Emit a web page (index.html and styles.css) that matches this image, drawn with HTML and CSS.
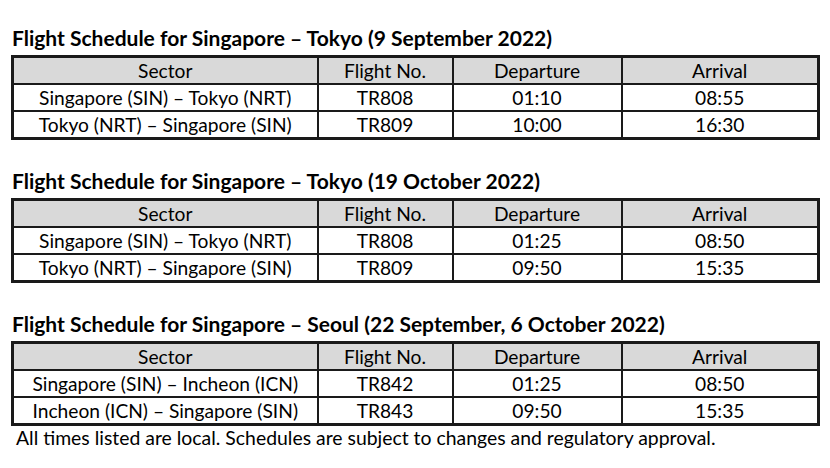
FILE: index.html
```html
<!DOCTYPE html>
<html>
<head>
<meta charset="utf-8">
<link rel="stylesheet" href="styles.css">
</head>
<body>
<section class="block">
  <h2 class="title">Flight Schedule for Singapore – Tokyo (9 September 2022)</h2>
  <table class="sched">
    <colgroup><col class="c1"><col class="c2"><col class="c3"><col class="c4"></colgroup>
    <tr class="head"><td>Sector</td><td>Flight No.</td><td>Departure</td><td>Arrival</td></tr>
    <tr><td>Singapore (SIN) – Tokyo (NRT)</td><td>TR808</td><td>01:10</td><td>08:55</td></tr>
    <tr><td>Tokyo (NRT) – Singapore (SIN)</td><td>TR809</td><td>10:00</td><td>16:30</td></tr>
  </table>
</section>
<section class="block">
  <h2 class="title">Flight Schedule for Singapore – Tokyo (19 October 2022)</h2>
  <table class="sched">
    <colgroup><col class="c1"><col class="c2"><col class="c3"><col class="c4"></colgroup>
    <tr class="head"><td>Sector</td><td>Flight No.</td><td>Departure</td><td>Arrival</td></tr>
    <tr><td>Singapore (SIN) – Tokyo (NRT)</td><td>TR808</td><td>01:25</td><td>08:50</td></tr>
    <tr><td>Tokyo (NRT) – Singapore (SIN)</td><td>TR809</td><td>09:50</td><td>15:35</td></tr>
  </table>
</section>
<section class="block">
  <h2 class="title">Flight Schedule for Singapore – Seoul (22 September, 6 October 2022)</h2>
  <table class="sched">
    <colgroup><col class="c1"><col class="c2"><col class="c3"><col class="c4"></colgroup>
    <tr class="head"><td>Sector</td><td>Flight No.</td><td>Departure</td><td>Arrival</td></tr>
    <tr><td>Singapore (SIN) – Incheon (ICN)</td><td>TR842</td><td>01:25</td><td>08:50</td></tr>
    <tr><td>Incheon (ICN) – Singapore (SIN)</td><td>TR843</td><td>09:50</td><td>15:35</td></tr>
  </table>
  <p class="note">All times listed are local. Schedules are subject to changes and regulatory approval.</p>
</section>
</body>
</html>
```

FILE: styles.css
```css
html, body {
  margin: 0;
  padding: 0;
  background: #fff;
}
body {
  font-family: Lato, "Liberation Sans", sans-serif;
  color: #000;
  padding: 26px 0 0 11px;
}
.block {
  margin-bottom: 29px;
}
.block:last-child {
  margin-bottom: 0;
}
.title {
  margin: 0 0 5px 1px;
  font-size: 21px;
  font-weight: bold;
  line-height: 24px;
}
.sched {
  border-collapse: collapse;
  table-layout: fixed;
  width: 806px;
  border: 3px solid #1a1a1a;
  font-size: 19.2px;
}
.c1 { width: 305px; }
.c2 { width: 135px; }
.c3 { width: 169px; }
.c4 { width: 197px; }
.sched td {
  border: 2px solid #1a1a1a;
  padding: 0;
  height: 25px;
  line-height: 25px;
  text-align: center;
  white-space: nowrap;
}
.head td {
  background: #d9d9d9;
}
.note {
  margin: 1px 0 0 5px;
  font-size: 19.4px;
  line-height: 22px;
}
```
